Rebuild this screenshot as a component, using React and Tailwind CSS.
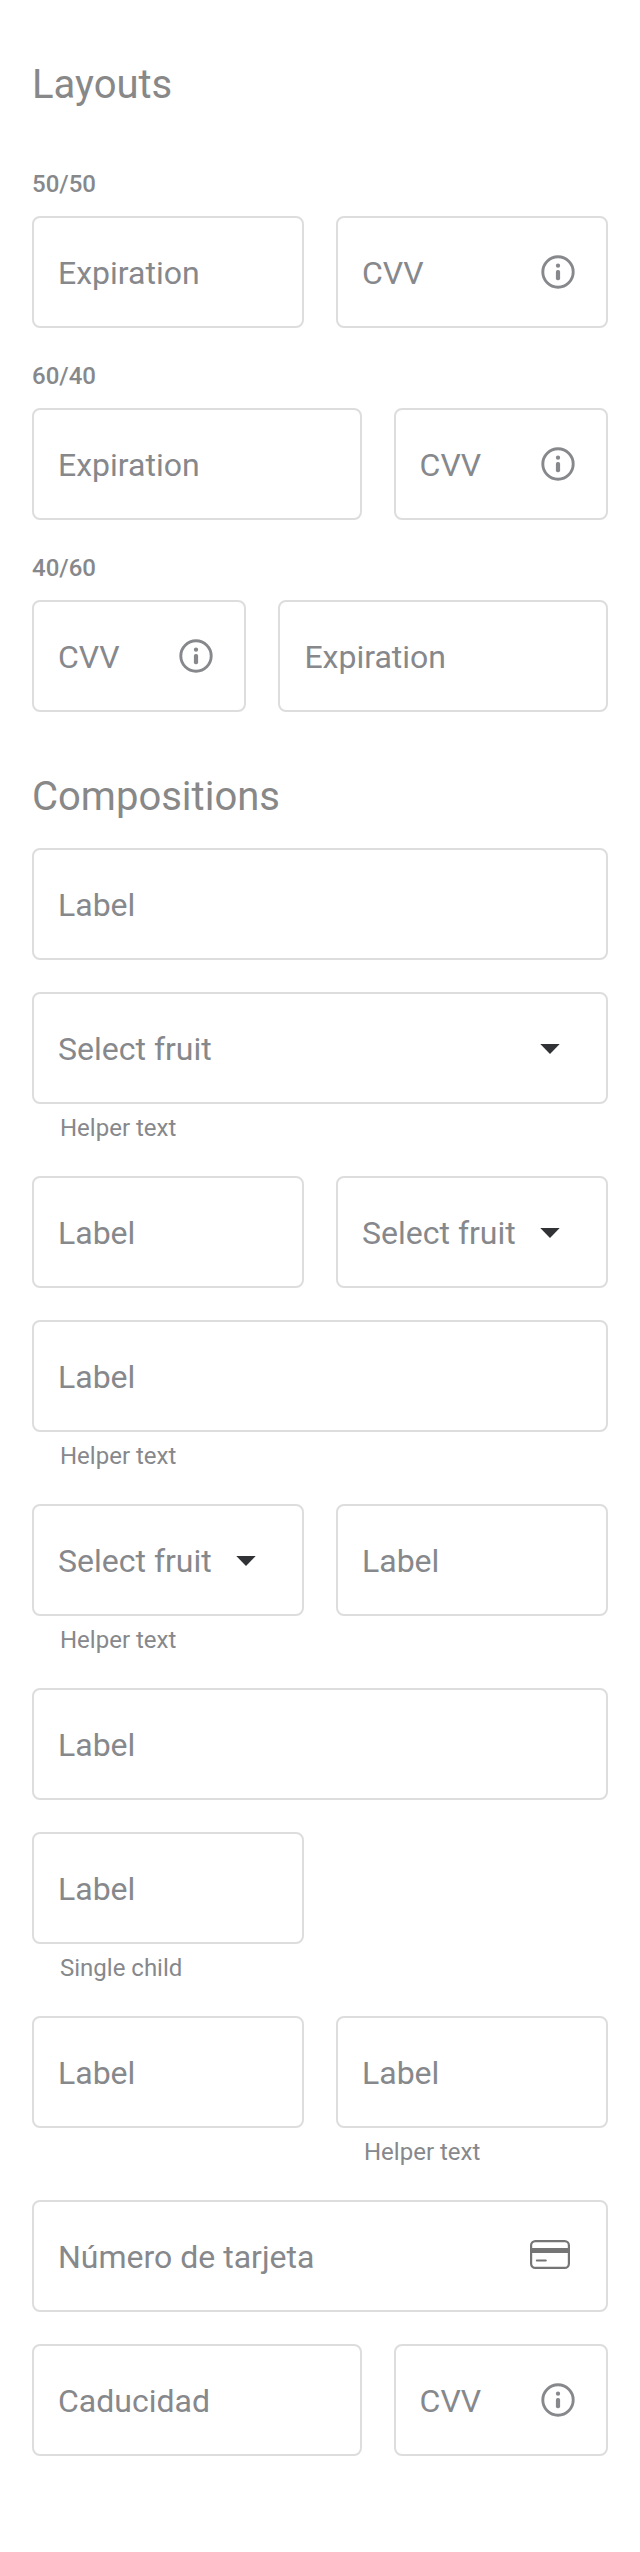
function InfoIcon() {
  return (
    <svg className="mr-[30px] size-9 shrink-0" viewBox="0 0 36 36" fill="none">
      <circle cx="18" cy="18" r="15.2" stroke="#86888c" strokeWidth="2.9" />
      <circle cx="18" cy="11.7" r="2.15" fill="#86888c" />
      <rect x="15.9" y="16" width="4.2" height="10.3" rx="1.8" fill="#86888c" />
    </svg>
  );
}

function CaretIcon() {
  return (
    <svg className="mt-0.5 mr-[46px] h-2.5 w-5 shrink-0" viewBox="0 0 20 10">
      <path d="M0.3 0H19.7L10 10Z" fill="#313235" />
    </svg>
  );
}

function CardIcon() {
  return (
    <svg className="mr-[36px] mb-0.5 h-[30px] w-10 shrink-0" viewBox="0 0 40 30" fill="none">
      <rect x="1.1" y="1.1" width="37.8" height="26.8" rx="4.2" stroke="#757575" strokeWidth="2.2" />
      <rect x="1" y="8" width="38" height="5" fill="#757575" />
      <path d="M6.8 20.4H15.8" stroke="#757575" strokeWidth="2" strokeLinecap="round" />
    </svg>
  );
}

const icons = { info: InfoIcon, caret: CaretIcon, card: CardIcon };

function Field({ label, icon, helper, className = "w-full" }) {
  const Icon = icons[icon];
  return (
    <div className={className}>
      <div className="flex h-28 items-center justify-between rounded-lg border-2 border-[#dddddd] pl-6 text-[32px] leading-[48px] text-[#86888c]">
        <span className="pt-0.5 whitespace-nowrap">{label}</span>
        {Icon && <Icon />}
      </div>
      {helper && (
        <div className="h-10 pt-2 pl-[28px] text-[24px] leading-8 text-[#86888c]">{helper}</div>
      )}
    </div>
  );
}

function Row({ children }) {
  return <div className="flex items-start gap-8">{children}</div>;
}

function Caption({ children }) {
  return <div className="h-8 text-[24px] leading-8 font-medium text-[#86888c]">{children}</div>;
}

const HALF = "w-[272px]";
const WIDE = "w-[calc(60%-16px)]";
const NARROW = "w-[calc(40%-16px)]";

export default function App() {
  return (
    <main className="h-[2552px] w-[640px] bg-white px-8 pt-[61px] font-['Roboto',sans-serif]">
      <h1 className="h-12 text-[40px] leading-12 text-[#888888]">Layouts</h1>
      <div className="flex flex-col gap-8 pt-[59px]">
        <section className="flex flex-col gap-4">
          <Caption>50/50</Caption>
          <Row>
            <Field className={HALF} label="Expiration" />
            <Field className={HALF} label="CVV" icon="info" />
          </Row>
        </section>
        <section className="flex flex-col gap-4">
          <Caption>60/40</Caption>
          <Row>
            <Field className={WIDE} label="Expiration" />
            <Field className={NARROW} label="CVV" icon="info" />
          </Row>
        </section>
        <section className="flex flex-col gap-4">
          <Caption>40/60</Caption>
          <Row>
            <Field className={NARROW} label="CVV" icon="info" />
            <Field className={WIDE} label="Expiration" />
          </Row>
        </section>
      </div>
      <h1 className="mt-[61px] h-12 text-[40px] leading-12 text-[#888888]">Compositions</h1>
      <div className="mt-[27px] flex flex-col gap-8">
        <Field label="Label" />
        <Field label="Select fruit" icon="caret" helper="Helper text" />
        <Row>
          <Field className={HALF} label="Label" />
          <Field className={HALF} label="Select fruit" icon="caret" />
        </Row>
        <Field label="Label" helper="Helper text" />
        <Row>
          <Field className={HALF} label="Select fruit" icon="caret" helper="Helper text" />
          <Field className={HALF} label="Label" />
        </Row>
        <Field label="Label" />
        <Field className={HALF} label="Label" helper="Single child" />
        <Row>
          <Field className={HALF} label="Label" />
          <Field className={HALF} label="Label" helper="Helper text" />
        </Row>
        <Field label="Número de tarjeta" icon="card" />
        <Row>
          <Field className={WIDE} label="Caducidad" />
          <Field className={NARROW} label="CVV" icon="info" />
        </Row>
      </div>
    </main>
  );
}
